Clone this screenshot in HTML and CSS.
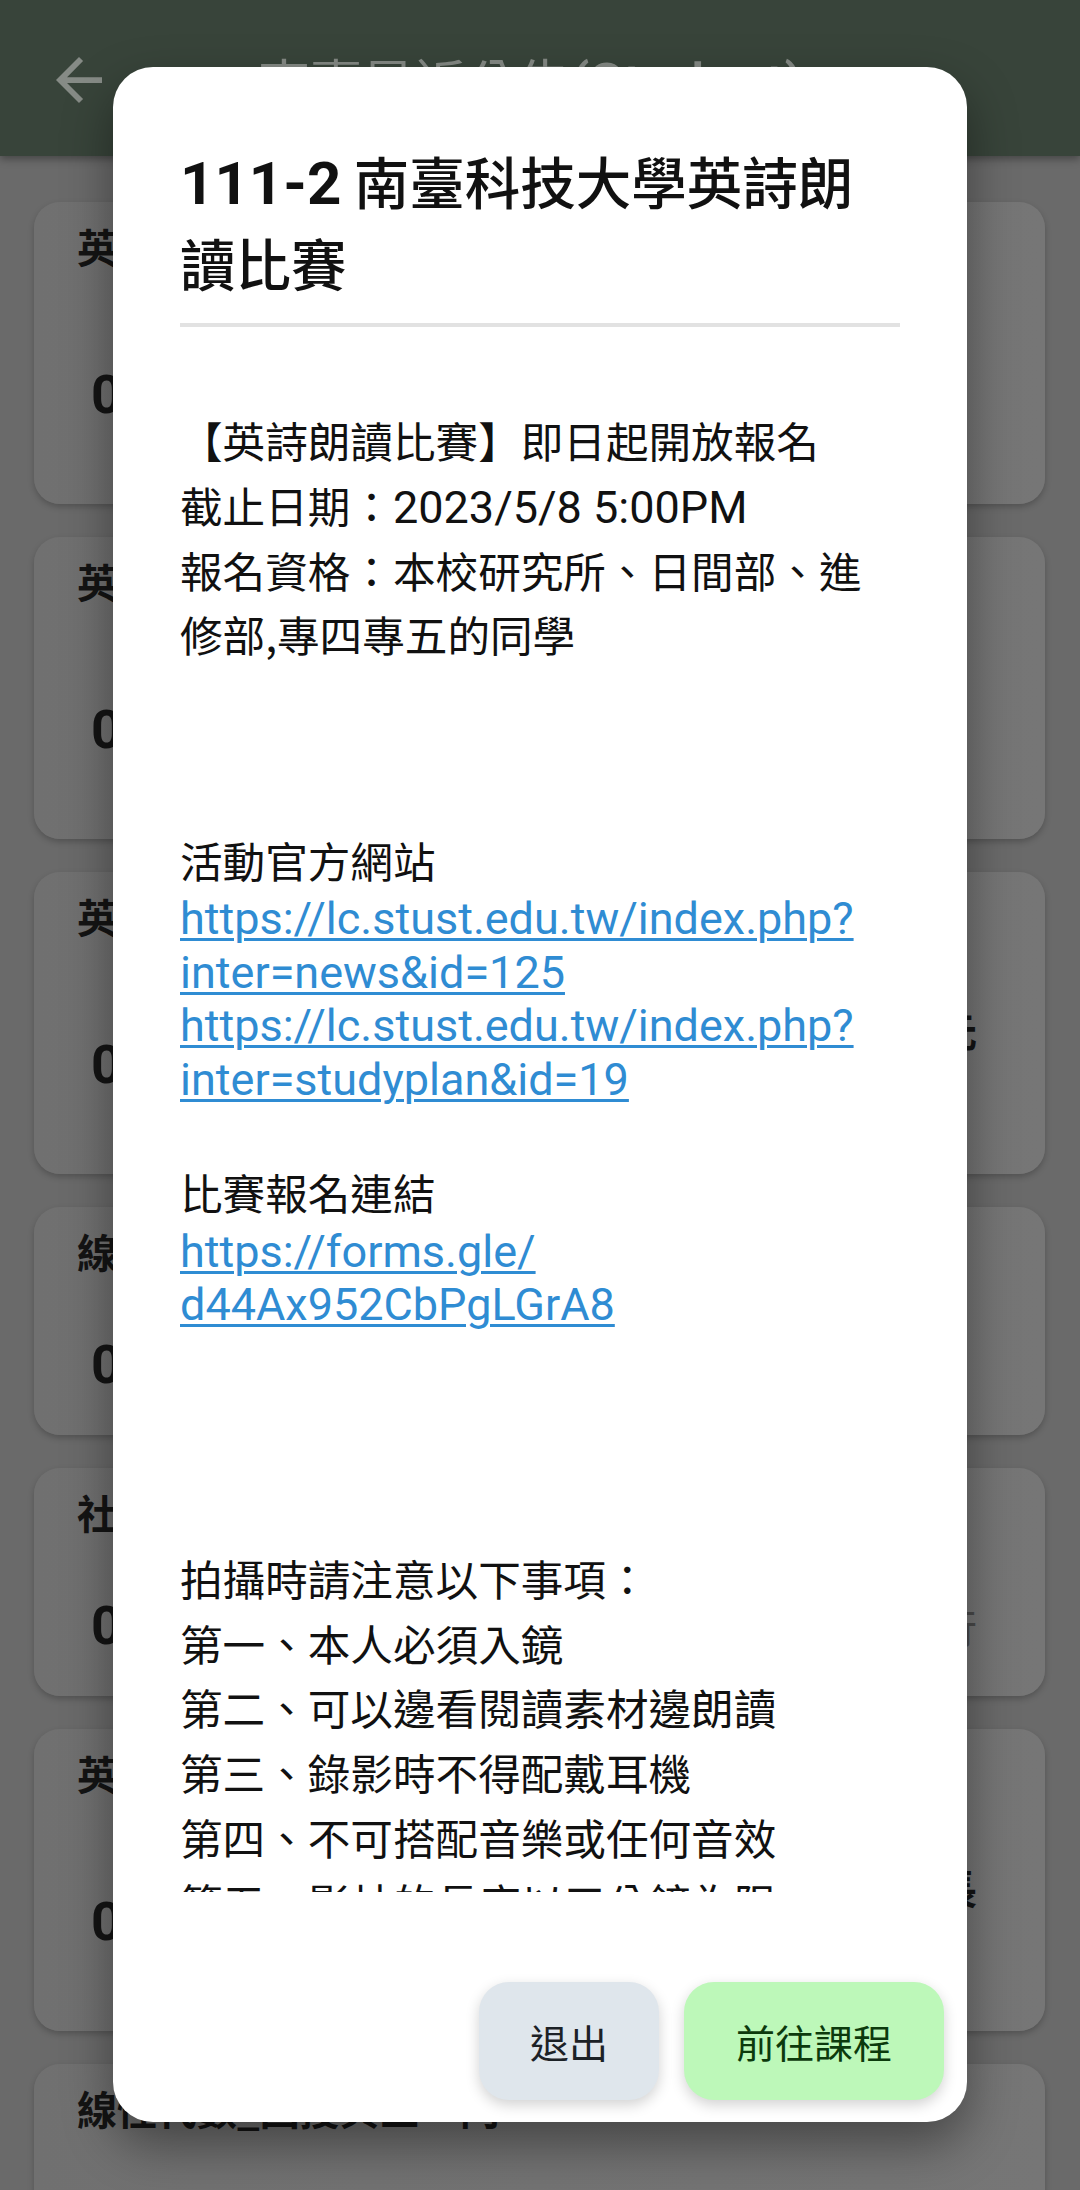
FILE: index.html
```html
<!DOCTYPE html>
<html lang="zh-Hant">
<head>
<meta charset="utf-8">
<title>南臺最近公告</title>
<link rel="stylesheet" href="styles.css">
</head>
<body>
<div class="screen">
  <header class="appbar">
    <svg class="back" viewBox="4 4 16 16" width="46" height="46" aria-hidden="true"><path d="M20 11H7.83l5.59-5.59L12 4l-8 8 8 8 1.41-1.41L7.83 13H20v-2z"/></svg>
    <div class="apptitle">南臺最近公告<span class="lat">(Student)</span></div>
  </header>

  <main class="list">
    <div class="card tall">
      <div class="ctitle">英文能力檢定獎勵申請公告</div>
      <div class="row">
        <div class="date">04/17</div>
        <div class="who"><div class="wl">英語中心</div><div class="wl">公告</div></div>
      </div>
    </div>
    <div class="card tall">
      <div class="ctitle">英語自學中心開放時間</div>
      <div class="row">
        <div class="date">04/12</div>
        <div class="who"><div class="wl">英語中心</div><div class="wl">公告</div></div>
      </div>
    </div>
    <div class="card tall">
      <div class="ctitle">英詩朗讀比賽</div>
      <div class="row">
        <div class="date">04/10</div>
        <div class="who"><div class="wl end">南臺科技大學英語教學研究元</div><div class="wl">公告</div></div>
      </div>
    </div>
    <div class="card short">
      <div class="ctitle">線上課程公告</div>
      <div class="row">
        <div class="date">04/06</div>
        <div class="who"><div class="wl">教務處</div></div>
      </div>
    </div>
    <div class="card short">
      <div class="ctitle">社團活動公告</div>
      <div class="row">
        <div class="date">04/03</div>
        <div class="who gray"><div class="wl end">課外活動指導組執行</div></div>
      </div>
    </div>
    <div class="card tall">
      <div class="ctitle">英語檢定模擬測驗</div>
      <div class="row">
        <div class="date">03/29</div>
        <div class="who"><div class="wl end">南臺科技大學語言中心主任長</div><div class="wl">公告</div></div>
      </div>
    </div>
    <div class="card tall">
      <div class="ctitle">線性代數_回授與三一門</div>
    </div>
  </main>

  <div class="dialog" role="dialog">
    <div class="dhead">
      <h1 class="dtitle"><span class="lat">111-2</span> 南臺科技大學英詩朗讀比賽</h1>
      <div class="divider"></div>
    </div>
    <div class="dbody">
      <p class="cj">【英詩朗讀比賽】即日起開放報名</p>
      <p class="cj">截止日期：<span class="lat">2023/5/8 5:00PM</span></p>
      <p class="cj">報名資格：本校研究所、日間部、進修部,專四專五的同學</p>
      <div class="blank"></div>
      <div class="blank"></div>
      <div class="blank"></div>
      <p class="cj">活動官方網站</p>
      <p class="lk"><a href="#">https://lc.stust.edu.tw/index.php?<wbr>inter=news&amp;id=125</a></p>
      <p class="lk"><a href="#">https://lc.stust.edu.tw/index.php?<wbr>inter=studyplan&amp;id=19</a></p>
      <div class="blank"></div>
      <p class="cj">比賽報名連結</p>
      <p class="lk"><a href="#">https://forms.gle/<wbr>d44Ax952CbPgLGrA8</a></p>
      <div class="blank"></div>
      <div class="blank"></div>
      <div class="blank"></div>
      <div class="blank"></div>
      <p class="cj">拍攝時請注意以下事項：</p>
      <p class="cj">第一、本人必須入鏡</p>
      <p class="cj">第二、可以邊看閱讀素材邊朗讀</p>
      <p class="cj">第三、錄影時不得配戴耳機</p>
      <p class="cj">第四、不可搭配音樂或任何音效</p>
      <p class="cj">第五、影片的長度以三分鐘為限</p>
    </div>
    <div class="dfoot">
      <button class="btn btn-exit" type="button">退出</button>
      <button class="btn btn-go" type="button">前往課程</button>
    </div>
  </div>
</div>
</body>
</html>
```

FILE: styles.css
```css
* {
  box-sizing: border-box;
  margin: 0;
  padding: 0;
}

html,
body {
  width: 1080px;
  height: 2190px;
  overflow: hidden;
}

body {
  background: #6a6a6a;
  font-family: "Noto Sans CJK TC", "Noto Sans", sans-serif;
  color: #121212;
}

.screen {
  position: relative;
  width: 1080px;
  height: 2190px;
  overflow: hidden;
}

.lat {
  font-family: Roboto, "Noto Sans", sans-serif;
  line-height: 1;
}

/* ---------- app bar (dimmed) ---------- */
.appbar {
  position: relative;
  z-index: 1;
  height: 156px;
  background: #38443a;
  display: flex;
  align-items: center;
  padding: 4px 0 0 56px;
  box-shadow: 0 3px 8px rgba(0, 0, 0, 0.35);
}

.back {
  flex: none;
  fill: #868b86;
}

.apptitle {
  margin-left: 156px;
  font-size: 52px;
  color: #858a85;
  white-space: nowrap;
}

.apptitle .lat {
  font-size: 56px;
  font-weight: 500;
}

/* ---------- background list (dimmed) ---------- */
.list {
  display: flex;
  flex-direction: column;
  gap: 33px;
  padding: 46px 35px 0 34px;
}

.card {
  flex: none;
  background: linear-gradient(90deg, #707070, #767676);
  border-radius: 26px;
  box-shadow: 0 3px 6px rgba(0, 0, 0, 0.22);
  padding: 16px 0 0 43px;
  overflow: hidden;
}

.card.tall {
  height: 302px;
}

.card.short {
  height: 228px;
}

.ctitle {
  font-size: 40px;
  font-weight: 700;
  line-height: 56px;
  white-space: nowrap;
  color: #141414;
}

.row {
  display: flex;
  align-items: center;
  margin-top: 51px;
}

.date {
  flex: none;
  margin-left: 14px;
  font-family: Roboto, sans-serif;
  font-size: 54px;
  font-weight: 700;
  line-height: 70px;
  color: #141414;
}

.who {
  flex: 1;
  display: flex;
  flex-direction: column;
  padding: 0 68px 0 40px;
  font-size: 40px;
  font-weight: 700;
  line-height: 70px;
  color: #141414;
  white-space: nowrap;
}

.who.gray {
  color: #4a4a4a;
  font-weight: 400;
}

.wl.end {
  text-align: right;
}

/* ---------- dialog ---------- */
.dialog {
  position: absolute;
  left: 113px;
  top: 67px;
  width: 854px;
  height: 2055px;
  z-index: 2;
  background: #ffffff;
  border-radius: 40px;
  box-shadow: 0 22px 50px rgba(0, 0, 0, 0.4);
  display: flex;
  flex-direction: column;
}

.dhead {
  flex: none;
  padding: 72px 67px 0;
}

.dtitle {
  font-size: 55.5px;
  font-weight: 500;
  line-height: 82px;
  color: #111111;
  padding-right: 20px;
}

.dtitle .lat {
  font-size: 60px;
  font-weight: 700;
}

.divider {
  height: 4px;
  margin-top: 20px;
  background: #e2e2e2;
}

.dbody {
  flex: 1 1 0;
  min-height: 0;
  overflow: hidden;
  padding: 81px 67px 0;
  color: #111111;
}

.cj {
  font-size: 42.6px;
  line-height: 64.8px;
}

.cj .lat {
  font-size: 45px;
}

.lk {
  font-family: Roboto, sans-serif;
  font-size: 45px;
  line-height: 53.5px;
}

.lk a {
  color: #2f8cd3;
  text-decoration: underline;
  text-decoration-thickness: 2.5px;
  text-underline-offset: 4px;
}

.blank {
  height: 53.5px;
}

.dfoot {
  flex: none;
  display: flex;
  justify-content: flex-end;
  gap: 25px;
  padding: 90px 23px 22px 0;
}

.btn {
  height: 118px;
  border: none;
  border-radius: 30px;
  font-family: "Noto Sans CJK TC", sans-serif;
  font-size: 39px;
  display: flex;
  align-items: center;
  justify-content: center;
  box-shadow: 0 5px 14px rgba(0, 0, 0, 0.18);
}

.btn-exit {
  width: 180px;
  background: #dfe6ec;
  color: #1c2126;
}

.btn-go {
  width: 260px;
  background: #bdf8b9;
  color: #0c3a0c;
}
```
